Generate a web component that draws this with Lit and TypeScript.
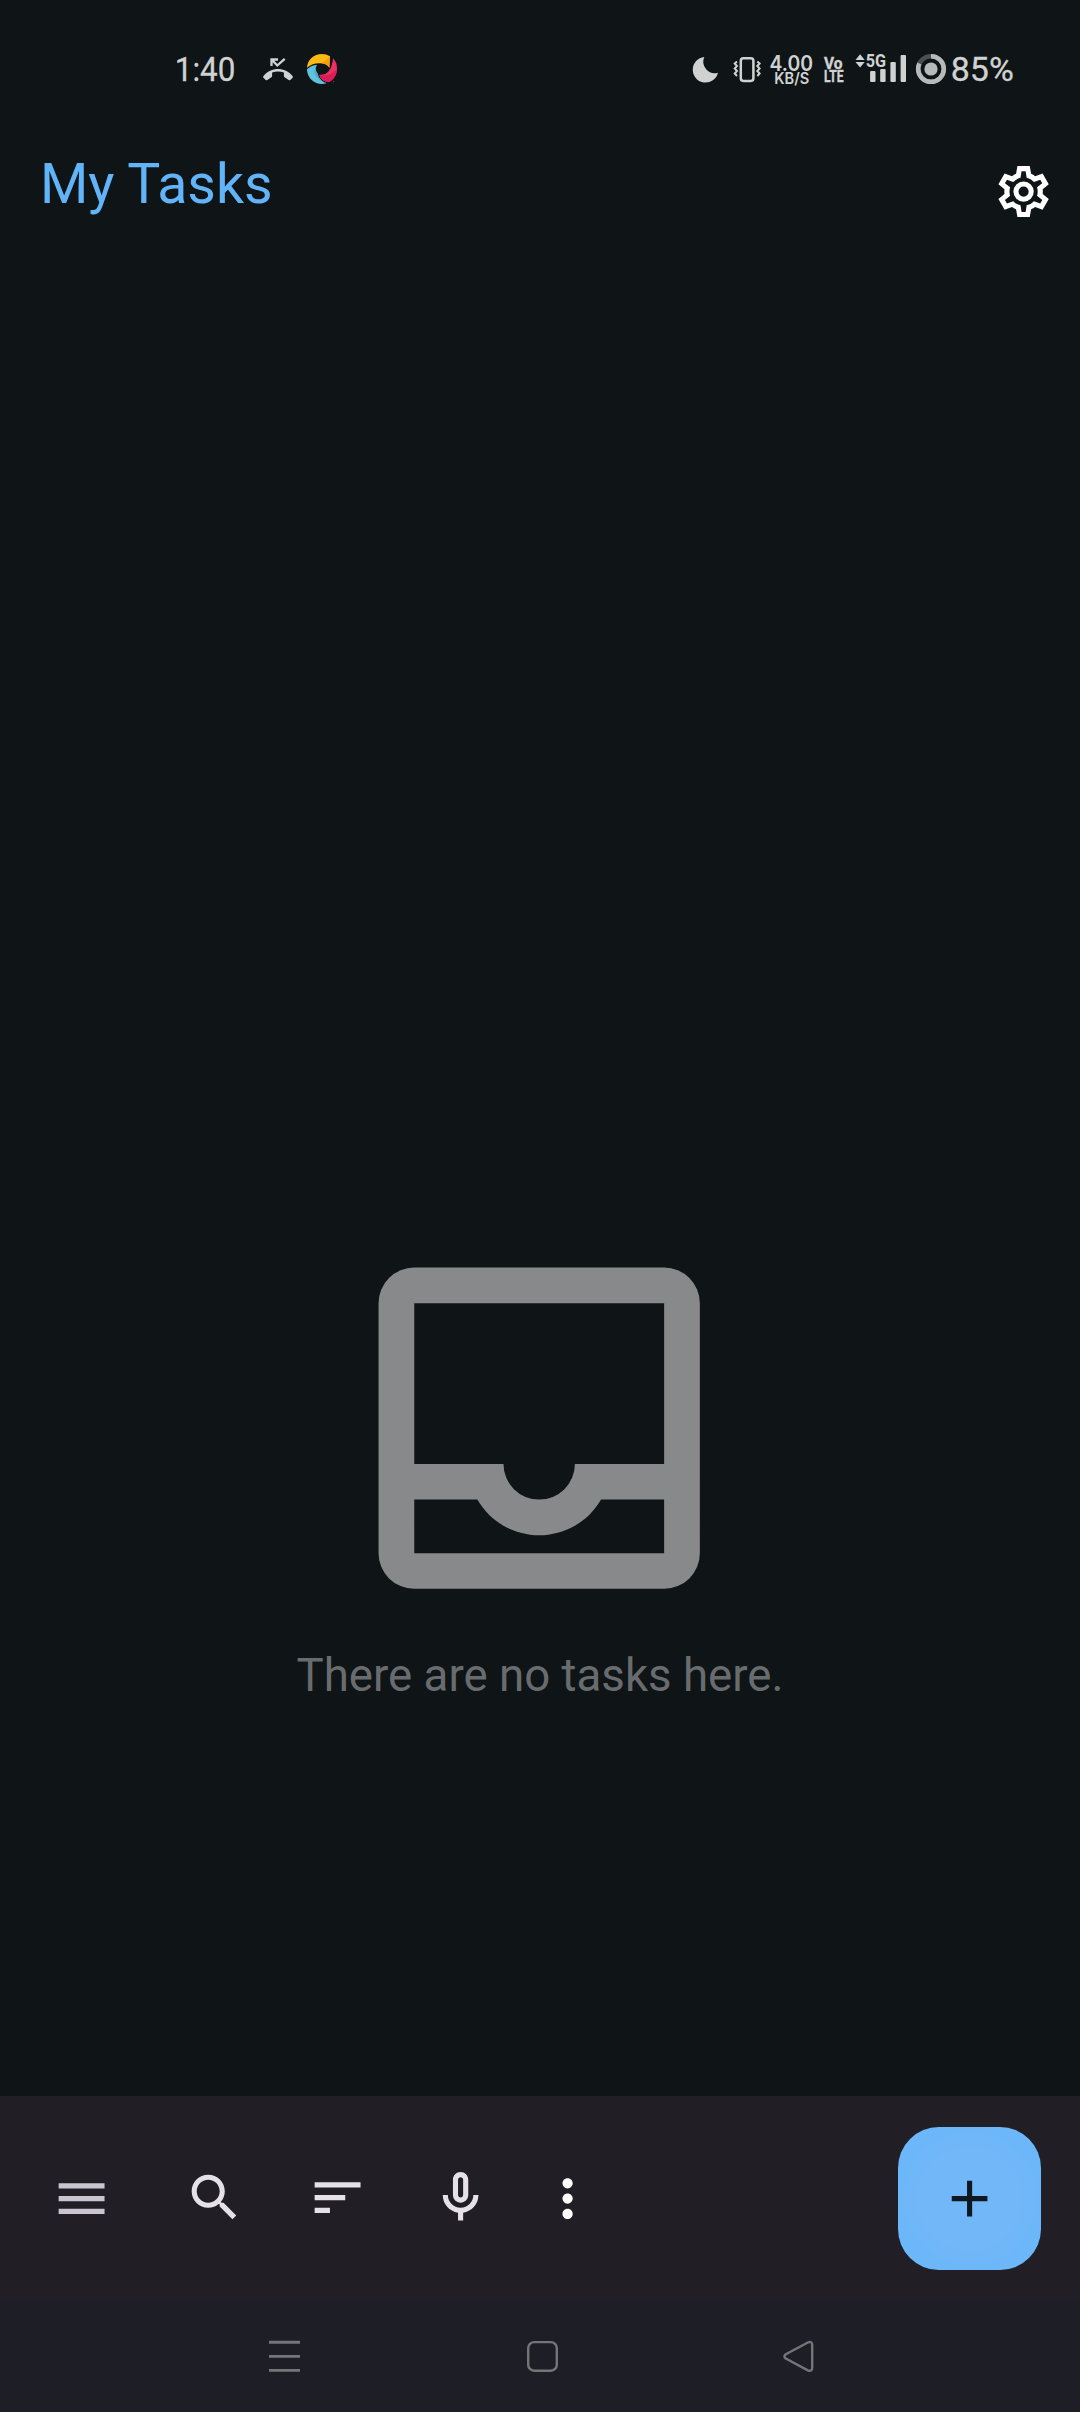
import { LitElement, html, svg, css } from "lit";
import { customElement } from "lit/decorators.js";

/* Rotates a point of the gear outline by a number of sixths of a turn. */
const turn = (x: number, y: number, sixths: number): string => {
  const a = (sixths * Math.PI) / 3;
  const px = 12 + x * Math.cos(a) - y * Math.sin(a);
  const py = 12 + x * Math.sin(a) + y * Math.cos(a);
  return `${px.toFixed(3)} ${py.toFixed(3)}`;
};

/* One closed six-toothed ring; base corners are joined by an arc. */
const cog = (tip: [number, number], base: [number, number]): string => {
  const r = Math.hypot(base[0], base[1]).toFixed(3);
  let d = "";
  for (let i = 0; i < 6; i++) {
    const start = turn(-base[0], -base[1], i);
    d += i === 0 ? `M${start}` : `A${r} ${r} 0 0 1 ${start}`;
    d += `L${turn(-tip[0], -tip[1], i)}L${turn(tip[0], -tip[1], i)}L${turn(base[0], -base[1], i)}`;
  }
  return `${d}A${r} ${r} 0 0 1 ${turn(-base[0], -base[1], 0)}Z`;
};

const GEAR = cog([2.42, 10], [2.95, 6.95]) + cog([0.8, 8], [1.2, 5.4]);

const ICONS = {
  menu: "M3 18h18v-2H3v2zm0-5h18v-2H3v2zm0-7v2h18V6H3z",
  search:
    "M15.5 14h-.79l-.28-.27C15.41 12.59 16 11.11 16 9.5 16 5.91 13.09 3 9.5 3S3 5.91 3 9.5 5.91 16 9.5 16c1.61 0 3.09-.59 4.23-1.57l.27.28v.79l5 4.99L20.49 19l-4.99-5zm-6 0C7.01 14 5 11.99 5 9.5S7.01 5 9.5 5 14 7.01 14 9.5 11.99 14 9.5 14z",
  sort: "M3 18h6v-2H3v2zM3 6v2h18V6H3zm0 7h12v-2H3v2z",
  mic: "M12 14c1.66 0 3-1.34 3-3V5c0-1.66-1.34-3-3-3S9 3.34 9 5v6c0 1.66 1.34 3 3 3zm-1-9c0-.55.45-1 1-1s1 .45 1 1v6c0 .55-.45 1-1 1s-1-.45-1-1V5zm6 6c0 2.76-2.24 5-5 5s-5-2.24-5-5H5c0 3.53 2.61 6.43 6 6.92V21h2v-3.08c3.39-.49 6-3.39 6-6.92h-2z",
  more: "M12 8c1.1 0 2-.9 2-2s-.9-2-2-2-2 .9-2 2 .9 2 2 2zm0 2c-1.1 0-2 .9-2 2s.9 2 2 2 2-.9 2-2-.9-2-2-2zm0 6c-1.1 0-2 .9-2 2s.9 2 2 2 2-.9 2-2-.9-2-2-2z",
  add: "M19 13h-6v6h-2v-6H5v-2h6V5h2v6h6v2z",
};

const icon = (name: keyof typeof ICONS) =>
  html`<svg class="icon" viewBox="0 0 24 24"><path d=${ICONS[name]} /></svg>`;

@customElement("status-bar")
export class StatusBar extends LitElement {
  static styles = css`
    :host {
      display: flex;
      justify-content: space-between;
      align-items: center;
      height: 138px;
      padding: 0 66px 0 174px;
      box-sizing: border-box;
      color: #d0d2d2;
      font-family: Roboto, "Noto Sans", sans-serif;
    }
    .side {
      display: flex;
      align-items: center;
    }
    svg {
      display: block;
      fill: currentColor;
      overflow: visible;
    }
    .call { margin-left: 28px; }
    .app { margin-left: 13px; }
    .vibrate { margin-left: 14px; }
    .speed { margin-left: 9px; }
    .volte { margin-left: 12px; }
    .signal { margin-left: 11px; }
    .battery { margin-left: 9px; }
    .percent { margin-left: 5px; }
    .big {
      font-size: 32.5px;
      stroke: currentColor;
      stroke-width: 0.3px;
    }
    .rate { font: 600 21px Inter, sans-serif; }
    .unit { font: 600 15.5px Inter, sans-serif; }
    .tiny {
      font-size: 17px;
      font-weight: 700;
      stroke: currentColor;
      stroke-width: 0.4px;
    }
    .gen { font-size: 18.5px; font-weight: 700; }
  `;

  render() {
    return html`
      <div class="side">
        <svg width="61" height="32" viewBox="174 53 61 32">
          <text class="big" x="174.8" y="80.6" textLength="60.5" lengthAdjust="spacingAndGlyphs">1:40</text>
        </svg>
        <svg class="call" width="30" height="32" viewBox="263 53 30 32">
          <path d="M263.3 76.2C271 66.7 285 66.7 292.7 76.2q.6.8-.1 1.5l-2.3 2.2q-.8.7-1.7.1l-4-2.7q-.7-.5-.7-1.3v-3.6q-5.9-2-11.8 0v3.6q0 .8-.7 1.3l-4 2.7q-.9.6-1.7-.1l-2.3-2.2q-.7-.7-.1-1.5z" />
          <path d="M271.5 66v-6.500h6.500M272.300 60.200l5 5.300 7.400-6.700" fill="none" stroke="currentColor" stroke-width="2.300" />
        </svg>
        <svg class="app" width="32" height="32" viewBox="-48 -48 96 96">
          <path fill="#fdb913" d="M-45-4C-44-27-25-45 0-45Q13-45 24-38L22-4Q14-16-2-17Q-25-20-45-4z" />
          <path fill="#f79a0c" d="M24-38L22-4Q14-16-2-17Q10-24 24-38z" />
          <path fill="#ee2f66" d="M33-32Q45-20 45-2Q45 26 22 39Q-4 38-8 17Q8 20 19 8Q31-6 33-32z" />
          <path fill="#d81e55" d="M45 0Q44 26 22 39Q-4 38-8 17Q20 26 45 0z" />
          <path fill="#5fc3dd" d="M-45 1Q-32-12-15-13Q-24 0-14 13Q-8 36 14 43Q-12 50-31 33Q-45 20-45 1z" />
          <path fill="#46aecb" d="M-15-13Q-24 0-14 13Q-8 36 14 43Q-14 34-22 16Q-26 0-15-13z" />
          <circle cx="35" cy="38" r="2" fill="#d81e55" />
        </svg>
      </div>
      <div class="side">
        <svg width="26" height="32" viewBox="693 53 26 32">
          <path d="M704.300 57A12.800 12.800 0 1 0 718 72.700A11.500 11.500 0 0 1 704.300 57z" />
        </svg>
        <svg class="vibrate" width="28" height="32" viewBox="733 53 28 32">
          <g fill="none" stroke="currentColor">
            <rect x="740.800" y="58.300" width="12.600" height="22.600" rx="2.600" stroke-width="2.500" />
            <path stroke-width="2" d="M737 61.500l-2.300 2 2.300 2.500-2.300 2.500 2.300 2.500-2.300 2.500 2.300 2.500M757.300 61.500l2.300 2-2.300 2.500 2.300 2.500-2.300 2.500 2.300 2.500-2.300 2.500" />
          </g>
        </svg>
        <svg class="speed" width="42" height="32" viewBox="770 53 42 32">
          <text class="rate" x="769.600" y="70.500" textLength="43.500" lengthAdjust="spacingAndGlyphs">4.00</text>
          <text class="unit" x="774.300" y="84.200" textLength="35" lengthAdjust="spacingAndGlyphs">KB/S</text>
        </svg>
        <svg class="volte" width="20" height="32" viewBox="824 53 20 32">
          <text class="tiny" x="824" y="68.800" textLength="18.500" lengthAdjust="spacingAndGlyphs">Vo</text>
          <text class="tiny" x="824" y="82" textLength="19.600" lengthAdjust="spacingAndGlyphs">LTE</text>
        </svg>
        <svg class="signal" width="51" height="32" viewBox="855 53 51 32">
          <path d="M855.500 60l4.600-5.700 4.600 5.700zM855.500 62l4.600 5.500 4.600-5.500z" />
          <text class="gen" x="865.700" y="67.200" textLength="20.300" lengthAdjust="spacingAndGlyphs">5G</text>
          <rect x="870.100" y="71" width="5.400" height="11" rx="1" />
          <rect x="880.200" y="69" width="5.400" height="13" rx="1" />
          <rect x="890.400" y="62" width="5.400" height="20" rx="1" />
          <rect x="900.600" y="55" width="5.400" height="27" rx="1" />
        </svg>
        <svg class="battery" width="32" height="32" viewBox="-16 -16 32 32">
          <circle r="12.800" fill="none" stroke="#4b4f51" stroke-width="4.600" />
          <circle r="12.800" fill="none" stroke="#b7b9ba" stroke-width="4.600" pathLength="100" stroke-dasharray="82 18" transform="rotate(-90)" />
          <circle r="6.600" fill="#b7b9ba" />
        </svg>
        <svg class="percent" width="62" height="32" viewBox="952 53 62 32">
          <text class="big" x="950.800" y="81" textLength="63" lengthAdjust="spacingAndGlyphs">85%</text>
        </svg>
      </div>
    `;
  }
}

@customElement("system-nav")
export class SystemNav extends LitElement {
  static styles = css`
    :host {
      display: flex;
      justify-content: space-between;
      align-items: center;
      height: 112px;
      padding: 0 265px 0 267px;
      box-sizing: border-box;
      background: #1e1e26;
    }
    svg {
      display: block;
      width: 36px;
      height: 36px;
      fill: none;
      stroke: #757579;
      stroke-width: 2.4;
    }
  `;

  render() {
    return html`
      <svg viewBox="267 2338 36 36"><path d="M269 2342.300h31M269 2356.400h31M269 2370.400h31" stroke-width="2.900" /></svg>
      <svg viewBox="523 2338 36 36"><rect x="528.200" y="2342.100" width="28.600" height="28.600" rx="6" /></svg>
      <svg viewBox="779 2338 36 36">
        <path d="M785.800 2354.200L807.800 2342.500Q812.200 2340.800 812.200 2345V2367.800Q812.200 2372 807.800 2370.300L785.800 2358.600Q783 2356.400 785.800 2354.200z" />
      </svg>
    `;
  }
}

@customElement("app-root")
export class AppRoot extends LitElement {
  static styles = css`
    :host {
      display: flex;
      flex-direction: column;
      height: 2412px;
      background: #0f1416;
      font-family: Roboto, "Noto Sans", sans-serif;
    }
    svg {
      display: block;
    }
    .icon {
      width: 61.2px;
      height: 61.2px;
      fill: currentColor;
    }
    .header {
      display: flex;
      justify-content: space-between;
      align-items: flex-start;
      height: 88px;
      padding: 0 26px 0 40px;
    }
    .title {
      margin: 14px 0 0;
      font-size: 55.4px;
      line-height: 66px;
      font-weight: 400;
      color: #62b4f9;
    }
    .settings {
      margin-top: 23px;
      color: #fff;
    }
    .empty {
      flex: 1;
      display: flex;
      flex-direction: column;
      align-items: center;
      padding-top: 987.5px;
      box-sizing: border-box;
    }
    .inbox {
      width: 428.4px;
      height: 428.4px;
      margin-right: 2.4px;
      fill: #88898b;
    }
    .message {
      margin: 7px 0 0;
      font-size: 45.65px;
      line-height: 54px;
      color: #696c6e;
    }
    .toolbar {
      display: flex;
      align-items: center;
      height: 204px;
      padding: 1px 39px 0 51px;
      box-sizing: border-box;
      background: #211f25;
      color: #e6e0e9;
    }
    .menu {
      color: #cac4d0;
    }
    .actions {
      display: flex;
      gap: 62px;
      margin-left: 71.6px;
      padding-bottom: 2px;
    }
    .more {
      margin-left: 46px;
      color: #fff;
    }
    .add {
      display: grid;
      place-items: center;
      width: 143px;
      height: 143px;
      margin-left: auto;
      border-radius: 41px;
      background: radial-gradient(circle, #72b7f7 0 50%, #6bb7f9 75%);
      color: #0f1820;
    }
  `;

  render() {
    return html`
      <status-bar></status-bar>
      <header class="header">
        <h1 class="title">My Tasks</h1>
        <svg class="icon settings" viewBox="0 0 24 24">
          <path fill-rule="evenodd" d=${GEAR} />
          ${svg`<circle cx="12" cy="12" r="3" fill="none" stroke="currentColor" stroke-width="2" />`}
        </svg>
      </header>
      <main class="empty">
        <svg class="inbox" viewBox="0 0 24 24">
          <path
            fill-rule="evenodd"
            d="M5 3H19A2 2 0 0 1 21 5V19A2 2 0 0 1 19 21H5A2 2 0 0 1 3 19V5A2 2 0 0 1 5 3zM5 5V14H10A2 2 0 0 0 14 14H19V5zM5 16V19H19V16H15.464A4 4 0 0 1 8.536 16z"
          />
        </svg>
        <p class="message">There are no tasks here.</p>
      </main>
      <footer class="toolbar">
        <div class="menu">${icon("menu")}</div>
        <div class="actions">${icon("search")}${icon("sort")}${icon("mic")}</div>
        <div class="more">${icon("more")}</div>
        <div class="add">${icon("add")}</div>
      </footer>
      <system-nav></system-nav>
    `;
  }
}
